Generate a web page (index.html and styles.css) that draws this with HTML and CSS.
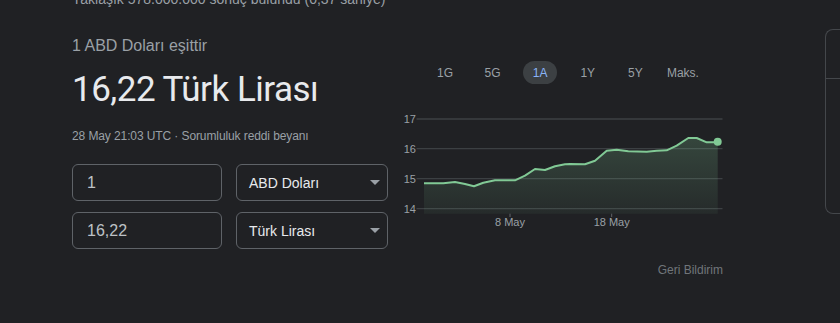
FILE: index.html
```
<!DOCTYPE html>
<html lang="tr">
<head>
    <meta charset="UTF-8">
    <meta name="viewport" content="width=device-width, initial-scale=1.0">
    <title>Döviz çevirici</title>
    <link rel="stylesheet" href="styles.css">
</head>
<body>
    <div class="page">
        <div class="converter">
            <div class="result-stats">Yaklaşık 578.000.000 sonuç bulundu (0,37 saniye)</div>
            <div class="rate-label">1 ABD Doları eşittir</div>
            <div class="rate-value">16,22 Türk Lirası</div>
            <div class="rate-meta">28 May 21:03 UTC · <span class="disclaimer">Sorumluluk reddi beyanı</span></div>

            <div class="form-row">
                <input class="amount" type="text" value="1">
                <div class="currency-select">
                    <span>ABD Doları</span>
                    <span class="arrow"></span>
                </div>
            </div>
            <div class="form-row">
                <input class="amount" type="text" value="16,22">
                <div class="currency-select">
                    <span>Türk Lirası</span>
                    <span class="arrow"></span>
                </div>
            </div>
        </div>

        <div class="chart-panel">
            <div class="range-tabs">
                <span class="tab">1G</span>
                <span class="tab">5G</span>
                <span class="tab active">1A</span>
                <span class="tab">1Y</span>
                <span class="tab">5Y</span>
                <span class="tab">Maks.</span>
            </div>

            <svg class="chart" width="325" height="125" viewBox="0 0 325 125">
                <defs>
                    <linearGradient id="area" x1="0" y1="33" x2="0" y2="109" gradientUnits="userSpaceOnUse">
                        <stop offset="0" stop-color="#81c995" stop-opacity="0.22"/>
                        <stop offset="1" stop-color="#81c995" stop-opacity="0.06"/>
                    </linearGradient>
                </defs>
                <g class="grid">
                    <line x1="16.5" y1="14" x2="322.5" y2="14"/>
                    <line x1="16.5" y1="43.7" x2="322.5" y2="43.7"/>
                    <line x1="16.5" y1="73.7" x2="322.5" y2="73.7"/>
                    <line x1="16.5" y1="103.7" x2="322.5" y2="103.7"/>
                </g>
                <g class="y-labels">
                    <text x="16" y="18">17</text>
                    <text x="16" y="47.7">16</text>
                    <text x="16" y="77.7">15</text>
                    <text x="16" y="107.7">14</text>
                </g>
                <polygon class="area" points="24,78.3 43.3,78.3 55,77 65,79 74,81.3 83.3,77.7 95,75.3 115,75.3 125,70.7 135,64 145,65 155,61.3 165,59.3 170,59 185,59.3 195,55.7 206.7,45.7 216.7,44.7 228.3,46.3 246.7,46.7 256.7,45.7 266.7,45.3 276.7,40.7 288.3,33 296.7,33 306.7,37.3 314,37.3 317.7,36.7 317.7,108.7 24,108.7"/>
                <polyline class="line" points="24,78.3 43.3,78.3 55,77 65,79 74,81.3 83.3,77.7 95,75.3 115,75.3 125,70.7 135,64 145,65 155,61.3 165,59.3 170,59 185,59.3 195,55.7 206.7,45.7 216.7,44.7 228.3,46.3 246.7,46.7 256.7,45.7 266.7,45.3 276.7,40.7 288.3,33 296.7,33 306.7,37.3 314,37.3 317.7,36.7"/>
                <circle class="dot" cx="317.7" cy="36.7" r="4"/>
                <g class="ticks">
                    <line x1="110" y1="108.7" x2="110" y2="112"/>
                    <line x1="211.7" y1="108.7" x2="211.7" y2="112"/>
                </g>
                <g class="x-labels">
                    <text x="110" y="121">8 May</text>
                    <text x="211.7" y="121">18 May</text>
                </g>
            </svg>

            <div class="feedback">Geri Bildirim</div>
        </div>

        <div class="side-card">
            <div class="side-card-top"></div>
        </div>
    </div>
</body>
</html>
```

FILE: styles.css
```
* {
    margin: 0;
    padding: 0;
    box-sizing: border-box;
}

body {
    font-family: "Liberation Sans", Arial, sans-serif;
    background: #202124;
    color: #9aa0a6;
    overflow: hidden;
}

.page {
    display: flex;
    align-items: flex-start;
    padding-left: 72px;
}

.converter {
    width: 316px;
    flex-shrink: 0;
}

.result-stats {
    font-size: 14px;
    line-height: 20px;
    margin-top: -11px;
    color: #9aa0a6;
    white-space: nowrap;
}

.rate-label {
    font-size: 16px;
    line-height: 20px;
    margin-top: 27px;
    color: #9aa0a6;
}

.rate-value {
    font-family: Roboto, "Liberation Sans", sans-serif;
    font-size: 35px;
    letter-spacing: -0.5px;
    line-height: 44px;
    margin-top: 12px;
    color: #e8eaed;
    white-space: nowrap;
}

.rate-meta {
    font-size: 12px;
    line-height: 16px;
    margin-top: 16px;
    color: #9aa0a6;
    letter-spacing: -0.1px;
}

.form-row {
    display: flex;
    gap: 14px;
    margin-top: 20px;
}

.form-row + .form-row {
    margin-top: 11px;
}

.amount {
    width: 150px;
    height: 37px;
    padding: 0 14px;
    border: 1px solid #5f6368;
    border-radius: 6px;
    background: transparent;
    color: #bdc1c6;
    font-family: "Liberation Sans", Arial, sans-serif;
    font-size: 16px;
    outline: none;
}

.currency-select {
    width: 152px;
    height: 37px;
    display: flex;
    align-items: center;
    justify-content: space-between;
    padding: 0 7px 0 12px;
    border: 1px solid #5f6368;
    border-radius: 6px;
    color: #e8eaed;
    font-size: 14px;
}

.arrow {
    width: 0;
    height: 0;
    border-left: 5.5px solid transparent;
    border-right: 5.5px solid transparent;
    border-top: 5px solid #9aa0a6;
}

.chart-panel {
    width: 325px;
    flex-shrink: 0;
    margin-left: 12px;
}

.range-tabs {
    display: flex;
    gap: 13.6px;
    padding-left: 28px;
    margin-top: 61px;
}

.tab {
    width: 34px;
    height: 23px;
    display: flex;
    align-items: center;
    justify-content: center;
    border-radius: 12px;
    font-size: 12px;
    color: #9aa0a6;
    white-space: nowrap;
}

.tab.active {
    background: #3c4043;
    color: #8ab4f8;
}

.chart {
    display: block;
    margin-top: 21px;
}

.grid line {
    stroke: #3c4043;
    stroke-width: 1.3;
}

.y-labels text {
    font-size: 11px;
    fill: #9aa0a6;
    text-anchor: end;
}

.x-labels text {
    font-size: 11px;
    fill: #9aa0a6;
    text-anchor: middle;
}

.ticks line {
    stroke: #5f6368;
    stroke-width: 1;
}

.area {
    fill: url(#area);
}

.line {
    fill: none;
    stroke: #81c995;
    stroke-width: 2;
    stroke-linejoin: round;
}

.dot {
    fill: #81c995;
}

.feedback {
    font-size: 12px;
    line-height: 16px;
    margin-top: 32px;
    padding-right: 2px;
    text-align: right;
    color: #70757a;
}

.side-card {
    width: 60px;
    height: 185px;
    flex-shrink: 0;
    margin-left: 99.5px;
    margin-top: 29px;
    border: 1px solid #44474b;
    border-right: none;
    border-radius: 8px 0 0 8px;
}

.side-card-top {
    height: 49px;
    border-bottom: 1px solid #44474b;
}
```
